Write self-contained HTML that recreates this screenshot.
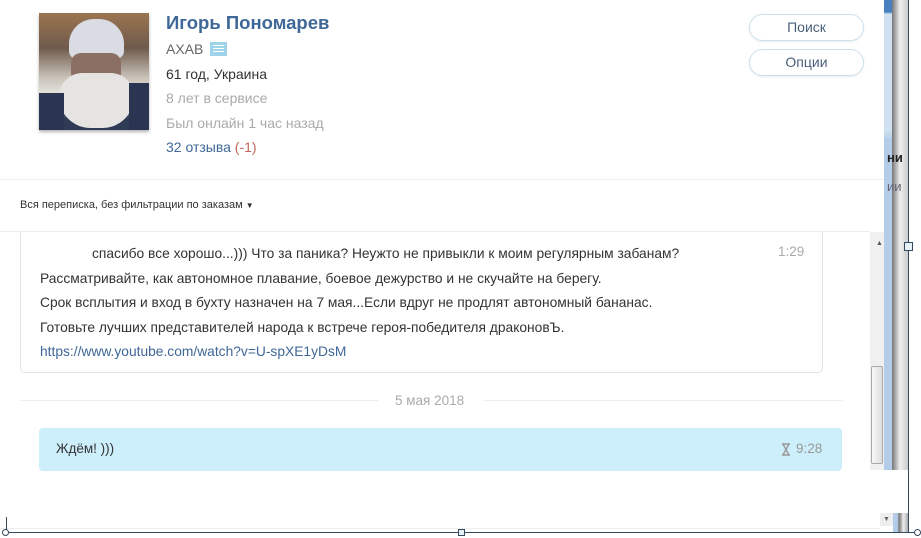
<!DOCTYPE html>
<html><head><meta charset="utf-8"><style>
*{margin:0;padding:0;box-sizing:border-box}
body{width:921px;height:538px;overflow:hidden;background:#fff;font-family:"Liberation Sans","DejaVu Sans",sans-serif;position:relative}
.a{position:absolute;white-space:nowrap}
</style></head><body>
<div class="a" style="left:39px;top:13px;width:110px;height:117px;background:linear-gradient(180deg,#9b7550 0%,#6f5a4c 30%,#c9c2b8 55%,#e7e4e0 70%,#2f3a55 90%);box-shadow:0 2px 3px rgba(0,0,0,.3)">
<div class="a" style="left:30px;top:6px;width:55px;height:40px;border-radius:25px 25px 8px 8px;background:#d9dde3"></div>
<div class="a" style="left:32px;top:40px;width:50px;height:30px;border-radius:10px;background:#8a6f62"></div>
<div class="a" style="left:20px;top:60px;width:75px;height:55px;border-radius:30px 30px 40px 40px;background:#e6e4e2"></div>
<div class="a" style="left:0;top:80px;width:25px;height:37px;background:#2b3552"></div>
<div class="a" style="left:90px;top:70px;width:20px;height:47px;background:#2b3552"></div>
</div>
<div class="a" style="left:166px;top:12px;font-size:18.5px;font-weight:bold;color:#3f6797">Игорь Пономарев</div>
<div class="a" style="left:166px;top:41px;font-size:14px;color:#666">АХАВ</div>
<div class="a" style="left:210px;top:42px;width:17px;height:14px;background:#9fd3ea"><div style="margin:3px 3px;height:1px;background:#fff;box-shadow:0 3px 0 #fff,0 6px 0 #fff"></div></div>
<div class="a" style="left:166px;top:66px;font-size:14px;color:#333">61 год, Украина</div>
<div class="a" style="left:166px;top:90px;font-size:14px;color:#aaa">8 лет в сервисе</div>
<div class="a" style="left:166px;top:115px;font-size:14px;color:#aaa">Был онлайн 1 час назад</div>
<div class="a" style="left:166px;top:139px;font-size:14px;color:#3f6797">32 отзыва <span style="color:#c0665a">(-1)</span></div>
<div class="a" style="left:749px;top:14px;width:115px;height:27px;border:1px solid #cde0ea;border-radius:14px;text-align:center;line-height:25px;font-size:14px;color:#4a5f7a;box-shadow:0 1px 2px rgba(0,0,0,.08)">Поиск</div>
<div class="a" style="left:749px;top:49px;width:115px;height:27px;border:1px solid #cde0ea;border-radius:14px;text-align:center;line-height:25px;font-size:14px;color:#4a5f7a;box-shadow:0 1px 2px rgba(0,0,0,.08)">Опции</div>
<div class="a" style="left:0;top:179px;width:884px;height:1px;background:#eee"></div>
<div class="a" style="left:20px;top:199px;font-size:11px;color:#333">Вся переписка, без фильтрации по заказам <span style="font-size:8px">▼</span></div>
<div class="a" style="left:0;top:231px;width:870px;height:1px;background:#eee"></div>
<div class="a" style="left:20px;top:232px;width:803px;height:141px;border:1px solid #e3e3e3;border-top:none;border-radius:0 0 5px 5px"></div>
<div class="a" style="left:40px;top:242px;font-size:13.8px;color:#333;line-height:24.6px">
<div style="padding-left:52px">спасибо все хорошо...))) Что за паника? Неужто не привыкли к моим регулярным забанам?</div>
<div>Рассматривайте, как автономное плавание, боевое дежурство и не скучайте на берегу.</div>
<div>Срок всплытия и вход в бухту назначен на 7 мая...Если вдруг не продлят автономный бананас.</div>
<div>Готовьте лучших представителей народа к встрече героя-победителя драконовЪ.</div>
<div style="color:#3f6797">https://www.youtube.com/watch?v=U-spXE1yDsM</div>
</div>
<div class="a" style="left:778px;top:244px;font-size:13.5px;color:#aaa">1:29</div>
<div class="a" style="left:20px;top:400px;width:358px;height:1px;background:#eee"></div>
<div class="a" style="left:483px;top:400px;width:360px;height:1px;background:#eee"></div>
<div class="a" style="left:395px;top:393px;font-size:13.5px;color:#aaa">5 мая 2018</div>
<div class="a" style="left:39px;top:428px;width:803px;height:43px;background:#cdeefb;border-radius:4px"></div>
<div class="a" style="left:56px;top:441px;font-size:13.5px;color:#333">Ждём! )))</div>
<svg class="a" style="left:781px;top:443px" width="10" height="13" viewBox="0 0 10 13"><path d="M1 1h8M1 12h8M2 1l6 11M8 1L2 12M2 1v1M8 1v1M2 12v-1M8 12v-1" stroke="#999" stroke-width="1.4" fill="none"/></svg>
<div class="a" style="left:796px;top:441px;font-size:13.5px;color:#999">9:28</div>
<div class="a" style="left:870px;top:232px;width:14px;height:238px;background:#f0f0f0"></div>
<div class="a" style="left:876px;top:240px;font-size:7px;color:#555">▲</div>
<div class="a" style="left:871px;top:366px;width:12px;height:98px;background:linear-gradient(90deg,#f8f8f8,#ddd);border:1px solid #aaa;border-radius:2px"></div>
<div class="a" style="left:884px;top:0;width:8px;height:470px;background:linear-gradient(180deg,#4a7fc0 0,#4a7fc0 12px,#d0e0f0 14px,#d0e0f0 130px,#b3cde8 140px,#b3cde8 100%)"></div>
<div class="a" style="left:892px;top:0;width:16px;height:470px;background:linear-gradient(90deg,#777,#eee 50%,#ccc)"></div>
<div class="a" style="left:887px;top:150px;font-size:13px;font-weight:bold;color:#222">ни</div>
<div class="a" style="left:887px;top:179px;font-size:13px;color:#667">ии</div>
<div class="a" style="left:908px;top:0;width:1px;height:532px;background:#34495e"></div>
<div class="a" style="left:904px;top:242px;width:9px;height:9px;border:1px solid #34495e;background:#e8f0f8"></div>
<div class="a" style="left:880px;top:513px;width:13px;height:13px;background:#eee;font-size:7px;color:#666;text-align:center;line-height:13px">▼</div>
<div class="a" style="left:893px;top:513px;width:15px;height:19px;background:linear-gradient(90deg,#b3cde8 30%,#777 40%,#eee 70%,#aaa)"></div>
<div class="a" style="left:0;top:528px;width:880px;height:1px;background:#eee"></div>
<div class="a" style="left:5px;top:532px;width:916px;height:1px;background:#34495e"></div>
<div class="a" style="left:6px;top:517px;width:1px;height:15px;background:#34495e"></div>
<div class="a" style="left:2px;top:529px;width:7px;height:7px;border:1px solid #34495e;border-radius:50%;background:#fff"></div>
<div class="a" style="left:458px;top:529px;width:7px;height:7px;border:1px solid #34495e;background:#e8f0f8"></div>
<div class="a" style="left:914px;top:529px;width:7px;height:7px;border:1px solid #34495e;border-radius:50%;background:#fff"></div>
</body></html>
